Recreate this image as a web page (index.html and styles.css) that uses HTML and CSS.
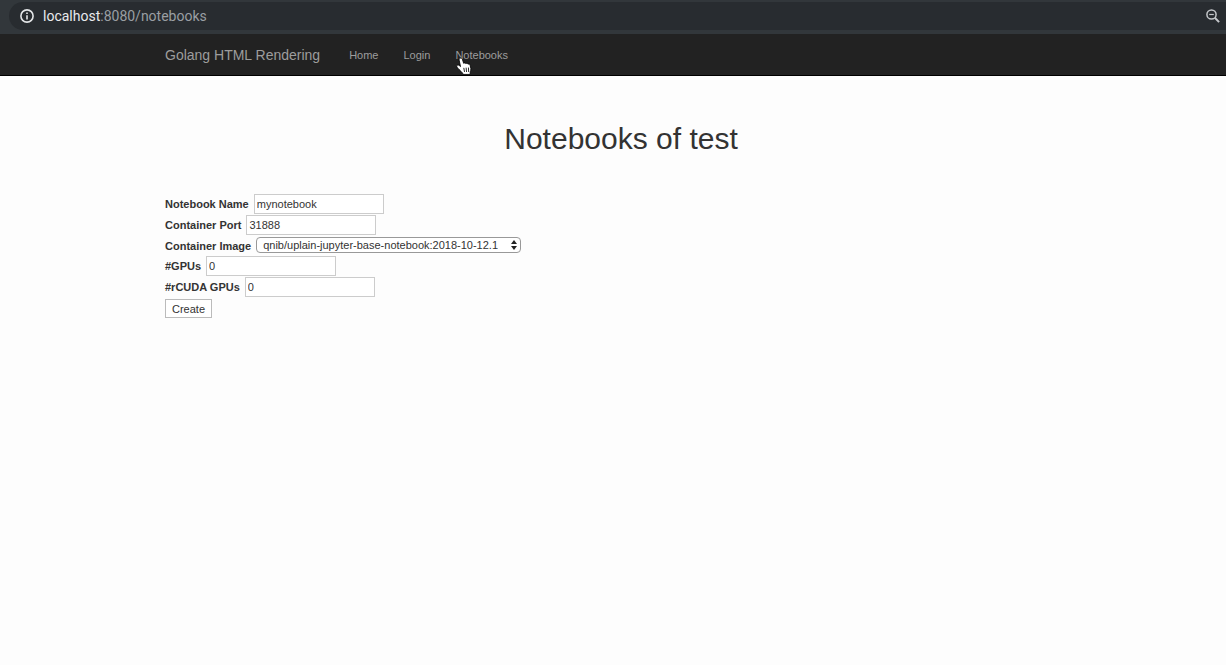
FILE: index.html
```
<!DOCTYPE html>
<html lang="en">
<head>
<meta charset="utf-8">
<title>Notebooks</title>
<link rel="stylesheet" href="styles.css">
</head>
<body>
<div class="toolbar">
  <div class="address">
    <svg class="info" viewBox="0 0 14 14" aria-hidden="true"><circle cx="7" cy="7" r="6.1" fill="none" stroke="currentColor" stroke-width="1.6"/><path d="M7 6.2v4.2M7 3.4v1.6" stroke="currentColor" stroke-width="1.6"/></svg>
    <span class="url"><span class="host">localhost</span>:8080/notebooks</span>
    <svg class="zoom-out" viewBox="0 0 14 14" aria-hidden="true"><circle cx="5.5" cy="5.5" r="4.6" fill="none" stroke="currentColor" stroke-width="1.5"/><path d="M3.2 5.5h4.6" stroke="currentColor" stroke-width="1.2"/><path d="M8.8 8.8l4.3 4.3" stroke="currentColor" stroke-width="2"/></svg>
  </div>
</div>
<header class="navbar">
  <nav class="container nav">
    <a class="brand" href="#">Golang HTML Rendering</a>
    <a href="#">Home</a>
    <a href="#">Login</a>
    <a class="current" href="#">Notebooks<svg class="pointer" viewBox="0 0 15 18" aria-hidden="true"><path d="M3.600 1.300C4.500.6 5.600 1 5.900 2l1.300 4c.6-.6 1.700-.5 2.100.3.6-.5 1.700-.3 2 .5.8-.4 1.800 0 2 1l.7 3.100c.2 1.200-.3 2.300-.6 3.200l-.1 2.400H6.500l-.3-1.200c-1-1.200-2.300-2.400-3.500-3.600C1.600 10.600.6 9.500.6 8.600c.1-1.100 1.500-1.200 2.400-.5l1.200 1L2.900 3c-.2-.8 0-1.300.7-1.700z" fill="#fff" stroke="#000" stroke-width=".8"/><path d="M7.300 10.300l.7 3.900M9.500 10.100l.4 4.100M11.700 10l.2 4.200" stroke="#000" stroke-width=".8"/></svg></a>
  </nav>
</header>
<main class="container">
  <h1>Notebooks of test</h1>
  <form>
    <div class="row"><label for="name">Notebook Name</label><input id="name" type="text" value="mynotebook"></div>
    <div class="row"><label for="port">Container Port</label><input id="port" type="text" value="31888"></div>
    <div class="row"><label for="image">Container Image</label><span class="select"><select id="image"><option>qnib/uplain-jupyter-base-notebook:2018-10-12.1</option></select><svg viewBox="0 0 6 10" aria-hidden="true"><path d="M0 4l3-4 3 4zM0 6l3 4 3-4z" fill="#222"/></svg></span></div>
    <div class="row"><label for="gpus">#GPUs</label><input id="gpus" type="text" value="0"></div>
    <div class="row"><label for="rcuda">#rCUDA GPUs</label><input id="rcuda" type="text" value="0"></div>
    <button type="button">Create</button>
  </form>
</main>
</body>
</html>
```
FILE: styles.css
```
* { box-sizing: border-box; }
body {
  margin: 0;
  background: #fdfdfd;
  color: #333;
  font: 11px/16px "Liberation Sans", Arial, sans-serif;
}
.toolbar {
  padding: 2px 0 4px 9px;
  background: #32373b;
}
.address {
  display: flex;
  align-items: center;
  height: 28px;
  padding: 0 6px 0 11px;
  border-radius: 14px 0 0 14px;
  background: #282c30;
  color: #9a9fa3;
  font: 14px/20px Roboto, sans-serif;
}
.info { width: 14px; height: 14px; color: #e4e6e8; }
.url { flex: 1; padding-left: 9px; }
.host { color: #e8eaed; }
.zoom-out { width: 14px; height: 14px; color: #c4c7ca; }
.container {
  max-width: 928px;
  margin: 0 auto;
  padding-left: 16px;
}
.navbar {
  background: #222;
  border-bottom: 1px solid #000;
}
.nav {
  display: flex;
  align-items: center;
  gap: 25px;
  height: 41px;
}
.nav a { position: relative; color: #9d9d9d; text-decoration: none; }
.nav .brand { padding-right: 4px; font-size: 14px; }
.pointer {
  position: absolute;
  left: 1px;
  top: 10px;
  width: 16px;
  height: 19px;
}
h1 {
  margin: 46px 0 38px;
  font-size: 30px;
  font-weight: 500;
  line-height: 34px;
  text-align: center;
}
form {
  display: flex;
  flex-direction: column;
  align-items: flex-start;
  gap: 1px;
}
.row { display: flex; align-items: center; gap: 5px; }
label { font-weight: 700; }
input, select, button { color: #333; font: inherit; }
input {
  width: 130px;
  height: 20px;
  padding: 0 2px;
  border: 1px solid #ccc;
  background: #fff;
}
.select { position: relative; display: flex; margin: 1px 0 2px; }
select {
  height: 16px;
  padding: 0 22px 0 6px;
  border: 1px solid #999;
  border-radius: 4px;
  background: #fff;
  line-height: 14px;
  appearance: none;
}
.select svg {
  position: absolute;
  right: 4px;
  top: 3px;
  width: 6px;
  height: 10px;
  pointer-events: none;
}
button {
  height: 19px;
  margin-top: 1px;
  padding: 0 6px;
  border: 1px solid #bbb;
  background: #fff;
}
```
